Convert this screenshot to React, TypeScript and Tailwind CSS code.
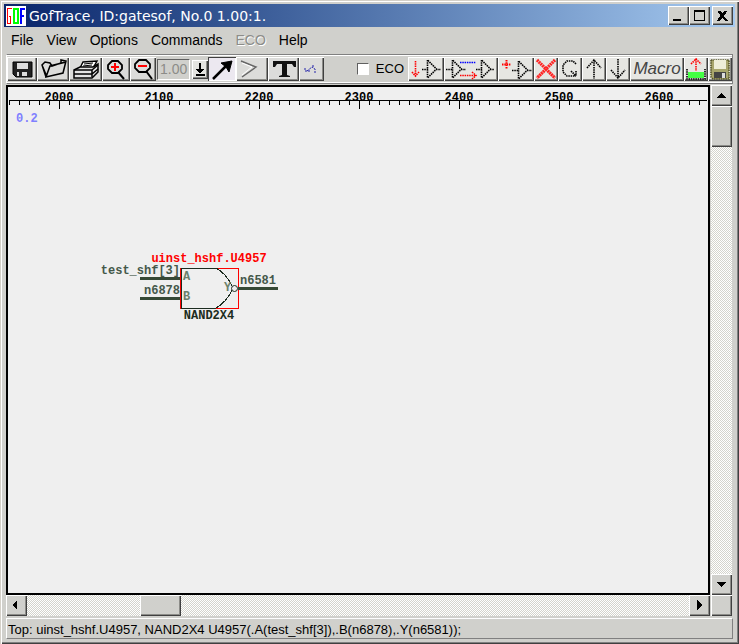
import type { ReactNode } from 'react';

const MENU = ['File', 'View', 'Options', 'Commands', 'ECO', 'Help'];
const RULER = [2000, 2100, 2200, 2300, 2400, 2500, 2600];
const TICKS = Array.from({ length: 70 }, (_, i) => i);

const RAISED = 'shadow-[inset_1px_1px_#fff,inset_-1px_-1px_#404040,inset_-2px_-2px_#8c8c88]';
const CHECKER = 'bg-[repeating-conic-gradient(#fff_0_25%,#d4d4cc_0_50%)] bg-[length:2px_2px]';

export default function App() {
  return (
    <div className="flex min-h-screen flex-col bg-[#d0d0cc] p-1 font-['Liberation_Sans',Arial,sans-serif] text-sm text-black shadow-[inset_1px_1px_#d4d0c8,inset_2px_2px_#fff,inset_-1px_-1px_#404040,inset_-2px_-2px_#808080]">
      <TitleBar />
      <MenuBar />
      <Toolbar />
      <Workspace />
      <footer className="mx-[2px] mt-[2px] mb-[1px] h-[21px] truncate border border-t-white border-r-[#808080] border-b-[#808080] border-l-white px-[1px] text-[13px] leading-[21px]">
        Top: uinst_hshf.U4957, NAND2X4 U4957(.A(test_shf[3]),.B(n6878),.Y(n6581));
      </footer>
    </div>
  );
}

function TitleBar() {
  return (
    <header className="flex h-[23px] items-center bg-linear-to-r from-[#0a246a] to-[#a6caf0] px-[2px]">
      <svg width="20" height="20" shapeRendering="crispEdges" aria-hidden="true">
        <rect width="20" height="20" fill="#fff" />
        <g fill="#f00">
          <rect x="1" y="2" width="5" height="1" />
          <rect x="1" y="2" width="1" height="16" />
          <rect x="1" y="17" width="4" height="1" />
          <rect x="4" y="10" width="1" height="8" />
          <rect x="3" y="10" width="2" height="1" />
        </g>
        <rect x="8" y="3" width="4" height="14" fill="none" stroke="#0f0" strokeWidth="2" />
        <g fill="#00f">
          <rect x="14" y="2" width="2" height="16" />
          <rect x="14" y="2" width="5" height="2" />
          <rect x="14" y="9" width="4" height="2" />
        </g>
      </svg>
      <h1 className="ml-[3px] flex-1 truncate font-['DejaVu_Sans',sans-serif] text-sm leading-[22px] text-white">
        GofTrace, ID:gatesof, No.0 1.00:1.
      </h1>
      <WindowButton label="Minimize">
        <path d="M5 13h8v2H5z" />
      </WindowButton>
      <WindowButton label="Maximize">
        <path d="M5 4h11v11H5zM6 6v8h9V6z" fillRule="evenodd" />
      </WindowButton>
      <WindowButton label="Close" className="ml-[2px]">
        <path d="M6 5h2l2 3 3-3h2l-4 5 4 4h-2l-3-3-2 3H6l3-4z" stroke="#000" />
      </WindowButton>
    </header>
  );
}

function WindowButton({ label, className = '', children }: { label: string; className?: string; children: ReactNode }) {
  return (
    <button aria-label={label} className={`h-[19px] w-[21px] bg-[#d0d0cc] ${RAISED} ${className}`}>
      <svg width="21" height="19" className="block" shapeRendering="crispEdges">{children}</svg>
    </button>
  );
}

function MenuBar() {
  return (
    <nav className="flex h-[27px] gap-[13px] px-[7px]">
      {MENU.map((item) => (
        <button
          key={item}
          disabled={item === 'ECO'}
          className="leading-[25px] disabled:text-[#8c8c88] disabled:[text-shadow:1px_1px_#fff]"
        >
          {item}
        </button>
      ))}
    </nav>
  );
}

type ToolProps = { label: string; size: string; look?: 'normal' | 'pressed' | 'disabled'; children: ReactNode };

function Tool({ label, size, look = 'normal', children }: ToolProps) {
  const looks = {
    normal: `bg-[#dcdcda] ${RAISED}`,
    pressed: 'bg-[#ece8f0] shadow-[inset_1px_1px_#404040,inset_-1px_-1px_#fff]',
    disabled: `bg-[#e6e6e2] ${RAISED}`,
  };
  // disabled icons are drawn with dotted lines
  const off = look === 'disabled';
  return (
    <button aria-label={label} disabled={off} className={`h-6 shrink-0 ${size} ${looks[look]}`}>
      <svg
        className="block h-6 w-full"
        fill="none"
        stroke="#000"
        strokeWidth={off ? 1.6 : 1}
        strokeDasharray={off ? '1.5 0.8' : undefined}
      >
        {children}
      </svg>
    </button>
  );
}

function Toolbar() {
  return (
    <div className="mx-[2px] flex h-[30px] items-center border border-t-[#808080] border-r-[#808080] border-b-[#808080] border-l-white shadow-[inset_0_1px_#fff,inset_0_-1px_#fff]">
      <Tool label="Save" size="w-[30px]">
        <path d="M6 5h19v15H9l-3-3z" fill="#222" />
        <path d="M10 6h11v6H10z" fill="#ddd" stroke="none" />
        <path d="M10 15h10v4H10z" fill="#ddd" stroke="none" />
        <path d="M12 15h3v4h-3z" fill="#222" stroke="none" />
      </Tool>
      <Tool label="Open" size="w-8">
        <path d="M9 20L5 8l3-3 5 1 2 3 9-3v-3l5 1-3 12-17 4 4-11 16-4M5 8l5 12" strokeWidth="1.5" />
      </Tool>
      <Tool label="Print" size="w-[33px]">
        <path d="M11 11l3-6 14-1-4 7z" fill="#fff" strokeWidth="1.4" />
        <path d="M15 7l9-1M14 9l9-1" />
        <path d="M5 13l6-3h13l5-3v8l-6 6H5z" strokeWidth="1.5" fill="#e4e4e4" />
        <path d="M5 13h18v7M23 13l6-5M5 17h18l6-5" strokeWidth="1.5" />
      </Tool>
      <Tool label="Zoom in" size="w-7">
        <path d="M10 4h6l4 4v4l-4 4h-6l-4-4V8z" strokeWidth="1.8" />
        <path d="M16 15l6 7" strokeWidth="2" />
        <path d="M9 10h8M13 6v8" stroke="#f00" strokeWidth="2" />
      </Tool>
      <Tool label="Zoom out" size="w-[26px]">
        <path d="M9 3h7l4 4v4l-4 4H9l-4-4V7z" strokeWidth="1.8" />
        <path d="M16 14l6 8" strokeWidth="2" />
        <path d="M8 9h9" stroke="#f00" strokeWidth="2" />
      </Tool>
      <input
        aria-label="Scale"
        defaultValue="1.00"
        disabled
        className="ml-[1px] h-[21px] w-[33px] shrink-0 border border-t-[#606060] border-r-white border-b-white border-l-[#606060] bg-[#d0d0cc] pl-[2px] text-sm text-[#8c8c88]"
      />
      <button aria-label="Choose scale" className={`ml-[2px] h-[19px] w-4 shrink-0 bg-[#e4e4e0] ${RAISED}`}>
        <svg className="block h-[19px] w-4" shapeRendering="crispEdges">
          <path d="M7 3h2v6h4l-5 4-5-4h4zM4 14h9v2H4z" />
        </svg>
      </button>
      <Tool label="Select" size="w-7" look="pressed">
        <path d="M5 22L18 9" strokeWidth="2.5" />
        <path d="M13 6l11-2-3 11-3-5z" fill="#000" />
      </Tool>
      <Tool label="Draw buffer" size="w-8">
        <path d="M5 4l15 6L6 20" stroke="#666" strokeWidth="1.5" />
        <path d="M6 6l10 4L6 18" stroke="#fff" />
      </Tool>
      <Tool label="Text" size="w-[31px]">
        <path d="M5 4h23v6h-2l-2-3h-5v11l3 1v1H11v-1l3-1V7H9l-2 3H5z" fill="#111" stroke="none" />
      </Tool>
      <Tool label="Undo" size="w-[25px]">
        <path d="M6 11v3h5M8 14l5-4 3 2v4M13 9h3" stroke="#22a" strokeDasharray="2 1" />
      </Tool>

      <label className="ml-auto flex items-center gap-[7px]">
        <input
          type="checkbox"
          className="h-3 w-3 appearance-none border border-t-[#606060] border-r-white border-b-white border-l-[#606060] bg-white"
        />
        <span className="text-[13px]">ECO</span>
      </label>
      <span className="w-1" />
      <Tool label="Insert gate on net" size="w-9" look="disabled">
        <path d="M7.5 4v15M4 15l3.500 4 3.500-4" stroke="#f00" />
        <path d="M19.5 3v18l9-9zM14 12.500h6M28 12.500h5" />
      </Tool>
      <Tool label="Replace gate" size="w-[54px]" look="disabled">
        <path d="M8.5 3v18l9-9zM2 12.500h6M17 12.500h5M37.500 3v18l9-9zM32 12.500h6M46 12.500h4" />
        <path d="M16 5.500h16" stroke="#00f" />
        <path d="M16 18.500h16M28 15l4 3.500-4 3.500" stroke="#f00" />
      </Tool>
      <Tool label="Add gate" size="w-9" look="disabled">
        <path d="M4 7.500h9M8.500 3v9" stroke="#f00" strokeWidth="2" />
        <path d="M20.500 4v18l9-9zM14 13.500h6M29 13.500h5" />
      </Tool>
      <Tool label="Delete" size="w-6" look="disabled">
        <path d="M3 3l18 18M21 3L3 21" stroke="#f22" strokeWidth="3.200" strokeDasharray="2 0.5" />
      </Tool>
      <Tool label="Undo ECO" size="w-6" look="disabled">
        <path d="M18 7l-3-3H9L5 8v7l4 4h9M13 14l5 5M18 14v5" />
      </Tool>
      <Tool label="Up" size="w-6" look="disabled">
        <path d="M12 3v19M5 11l7-8 7 8" />
      </Tool>
      <Tool label="Down" size="w-6" look="disabled">
        <path d="M12 2v19M5 13l7 8 7-8" />
      </Tool>
      <button disabled className={`h-6 w-[54px] shrink-0 bg-[#e6e6e2] text-center text-[17px] leading-6 text-[#444] italic ${RAISED}`}>
        Macro
      </button>
      <Tool label="Load" size="w-6" look="disabled">
        <path d="M12 2v12M7 7l5-5 5 5" stroke="#f00" />
        <path d="M4 15h16v6H4z" fill="#4f4" stroke="none" />
        <path d="M3 12v10h18V12" />
      </Tool>
      <Tool label="Save ECO" size="w-6" look="disabled">
        <path d="M3 3h18v19H5l-2-2z" fill="#a8a66c" stroke="#55552a" />
        <path d="M6 3h12v9H6z" fill="#eeeed8" stroke="none" />
        <path d="M6 15h12v6H6z" fill="#444" stroke="none" />
        <path d="M14 16h3v5h-3z" fill="#ddd" stroke="none" />
      </Tool>
    </div>
  );
}

function Workspace() {
  return (
    <main className="mr-[3px] ml-[2px] mt-[1px] grid flex-1 grid-cols-[1fr_21px] grid-rows-[1fr_21px] gap-x-[1px]">
      <div className="overflow-hidden border-2 border-black bg-[#efefef]">
        <Schematic />
      </div>
      <div className={`flex flex-col ${CHECKER}`}>
        <ScrollButton label="Scroll up" d="M10 8l5 5H5z" />
        <div className={`h-[41px] bg-[#d0d0cc] ${RAISED}`} />
        <div className="flex-1" />
        <ScrollButton label="Scroll down" d="M5 8h10l-5 5z" />
      </div>
      <div className={`flex ${CHECKER}`}>
        <ScrollButton label="Scroll left" d="M11 5v10l-5-5z" />
        <div className="w-[16%]" />
        <div className={`w-[41px] bg-[#d0d0cc] ${RAISED}`} />
        <div className="flex-1" />
        <ScrollButton label="Scroll right" d="M8 5v10l5-5z" />
      </div>
      <div className={`bg-[#d0d0cc] ${RAISED}`} />
    </main>
  );
}

function ScrollButton({ label, d }: { label: string; d: string }) {
  return (
    <button aria-label={label} className={`shrink-0 bg-[#d0d0cc] ${RAISED}`}>
      <svg width="21" height="21" className="block" shapeRendering="crispEdges">
        <path d={d} />
      </svg>
    </button>
  );
}

function Schematic() {
  return (
    <svg className="block h-full w-full font-['Liberation_Mono','Courier_New',monospace] text-xs font-bold">
      {/* ruler */}
      <g shapeRendering="crispEdges">
        <rect x="1" y="13" width="698" height="1" />
        {TICKS.map((i) => (
          <rect key={i} x={1 + i * 10} y="13" width="1" height={i % 10 === 5 ? 9 : 5} />
        ))}
      </g>
      {RULER.map((mark, i) => (
        <text key={mark} x={51 + i * 100} y="14" textAnchor="middle">{mark}</text>
      ))}
      <text x="8" y="35" fill="#8080ff">0.2</text>

      {/* gate body */}
      <g fill="none" shapeRendering="crispEdges">
        <rect x="172.5" y="181.5" width="58" height="40" stroke="#f00" />
        <path d="M208 181.5H173.5v40H208" stroke="#1c2c20" />
        <path d="M208 181Q219 187 225 201Q219 215 208 221" stroke="#1c2c20" />
        <path d="M132 191.5h40M132 211.5h40M230 201.5h40" stroke="#354835" strokeWidth="3" />
      </g>
      <g fill="#6b806b">
        <text x="175" y="193">A</text>
        <text x="175" y="213">B</text>
        <text x="216" y="204">Y</text>
      </g>
      <circle cx="226.5" cy="201.5" r="3" fill="#efefef" stroke="#1c2c20" />

      <g fill="#44584a">
        <text x="172" y="187" textAnchor="end">test_shf[3]</text>
        <text x="172" y="207" textAnchor="end">n6878</text>
        <text x="232" y="197">n6581</text>
      </g>
      <text x="201" y="175" textAnchor="middle" fill="#f00">uinst_hshf.U4957</text>
      <text x="201" y="232" textAnchor="middle" fill="#1c2c20">NAND2X4</text>
    </svg>
  );
}
